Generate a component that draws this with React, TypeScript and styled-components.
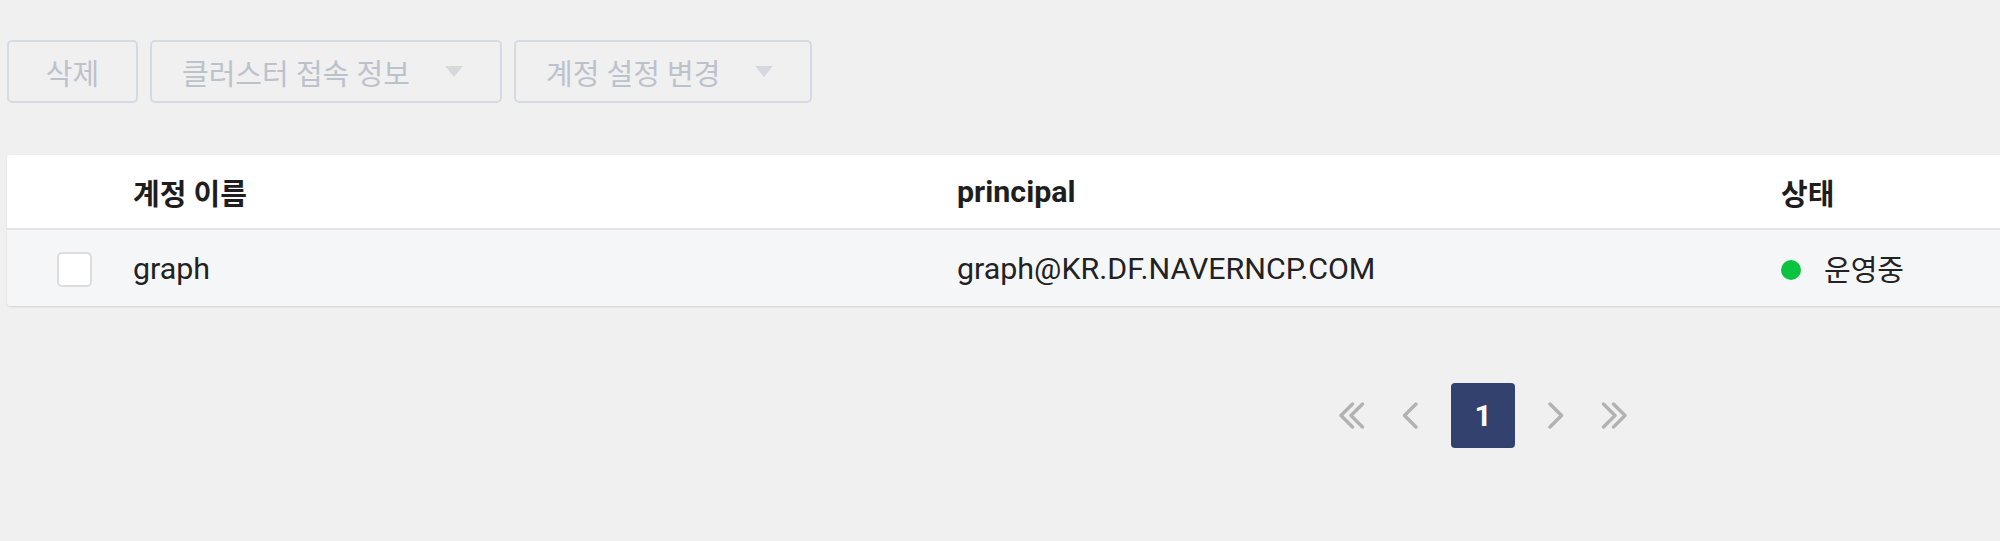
import styled, { createGlobalStyle } from 'styled-components'

const GlobalStyle = createGlobalStyle`
  html, body {
    margin: 0;
    padding: 0;
    background: #f0f0f0;
    overflow: hidden;
  }
  body {
    font-family: Roboto, "Noto Sans CJK KR", sans-serif;
    color: #222;
  }
`

type Account = { name: string; principal: string; status: string }

const accounts: Account[] = [
  { name: 'graph', principal: 'graph@KR.DF.NAVERNCP.COM', status: '운영중' },
]

function Chevron({ double, dir }: { double?: boolean; dir: 'left' | 'right' }) {
  const w = double ? 26 : 16
  return (
    <svg width={w} height="27" viewBox={`0 0 ${w} 27`} fill="none"
      stroke="#b2b2b2" strokeWidth="3.4" strokeLinecap="round" strokeLinejoin="round"
      style={{ transform: dir === 'right' ? 'scaleX(-1)' : undefined }}>
      {double ? (
        <>
          <polyline points="13.5,2 2,13.5 13.5,25" />
          <polyline points="23.5,2 12,13.5 23.5,25" />
        </>
      ) : (
        <polyline points="14,2 2.5,13.5 14,25" />
      )}
    </svg>
  )
}

export default function App() {
  return (
    <Page>
      <GlobalStyle />
      <Toolbar>
        <ActionButton $w={131} disabled>
          <Ko>삭제</Ko>
        </ActionButton>
        <ActionButton $w={352} $dropdown disabled>
          <Ko>클러스터 접속 정보</Ko>
          <Caret />
        </ActionButton>
        <ActionButton $w={298} $dropdown disabled>
          <Ko>계정 설정 변경</Ko>
          <Caret />
        </ActionButton>
      </Toolbar>

      <Table>
        <HeadRow>
          <Cell />
          <HeadCell><Ko>계정 이름</Ko></HeadCell>
          <HeadCell>principal</HeadCell>
          <HeadCell><Ko>상태</Ko></HeadCell>
        </HeadRow>
        {accounts.map((a) => (
          <BodyRow key={a.principal}>
            <CheckCell>
              <Checkbox />
            </CheckCell>
            <Cell>{a.name}</Cell>
            <Cell>{a.principal}</Cell>
            <Cell>
              <StatusDot />
              <Ko>{a.status}</Ko>
            </Cell>
          </BodyRow>
        ))}
      </Table>

      <Pagination>
        <NavButton aria-label="first"><Chevron double dir="left" /></NavButton>
        <NavButton aria-label="prev"><Chevron dir="left" /></NavButton>
        <PageNumber>1</PageNumber>
        <NavButton aria-label="next"><Chevron dir="right" /></NavButton>
        <NavButton aria-label="last"><Chevron double dir="right" /></NavButton>
      </Pagination>
    </Page>
  )
}

const Page = styled.div`
  padding: 40px 0 0 7px;
  width: 2952px;
`

const Toolbar = styled.div`
  display: flex;
  gap: 12px;
`

const ActionButton = styled.button<{ $w: number; $dropdown?: boolean }>`
  width: ${({ $w }) => $w}px;
  height: 63px;
  box-sizing: border-box;
  display: flex;
  align-items: center;
  justify-content: ${({ $dropdown }) => ($dropdown ? 'space-between' : 'center')};
  padding: ${({ $dropdown }) => ($dropdown ? '0 37px 0 30px' : '0')};
  background: transparent;
  border: 2px solid #d6dbe3;
  border-radius: 5px;
  color: #bcc2cc;
  font-family: Roboto, "Noto Sans CJK KR", sans-serif;
  cursor: default;
`

const Ko = styled.span`
  font-size: 29px;
`

const Caret = styled.span`
  width: 0;
  height: 0;
  border-left: 9px solid transparent;
  border-right: 9px solid transparent;
  border-top: 11px solid #d6d8dc;
`

const Table = styled.div`
  margin-top: 52px;
  background: #fff;
  border-radius: 4px;
  box-shadow: 0 1px 2px rgba(0, 0, 0, 0.12);
  overflow: hidden;
`

const Row = styled.div`
  display: grid;
  grid-template-columns: 126px 824px 824px 1fr;
  align-items: center;
`

const HeadRow = styled(Row)`
  height: 73px;
  background: #fff;
  border-bottom: 2px solid #e1e2e4;
`

const BodyRow = styled(Row)`
  height: 76px;
  background: #f5f6f8;
`

const Cell = styled.div`
  display: flex;
  align-items: center;
  font-size: 30.4px;
  color: #222;
`

const HeadCell = styled(Cell)`
  font-weight: 700;
  color: #1e1e1e;
`

const CheckCell = styled(Cell)`
  padding-left: 50px;
`

const Checkbox = styled.span`
  width: 35px;
  height: 35px;
  box-sizing: border-box;
  border: 2px solid #dcdde0;
  border-radius: 5px;
  background: #fff;
  margin-top: 2px;
`

const StatusDot = styled.span`
  width: 20px;
  height: 20px;
  border-radius: 50%;
  background: #0ac33e;
  margin: 4px 23px 0 0;
`

const Pagination = styled.nav`
  margin-top: 77px;
  display: flex;
  justify-content: center;
  align-items: center;
`

const NavButton = styled.button`
  width: 58px;
  height: 65px;
  display: flex;
  align-items: center;
  justify-content: center;
  background: transparent;
  border: none;
  padding: 0;
`

const PageNumber = styled.span`
  width: 64px;
  height: 65px;
  margin: 0 12px;
  display: flex;
  align-items: center;
  justify-content: center;
  background: #33416e;
  border-radius: 4px;
  color: #fff;
  font-size: 30px;
  font-weight: 700;
`
